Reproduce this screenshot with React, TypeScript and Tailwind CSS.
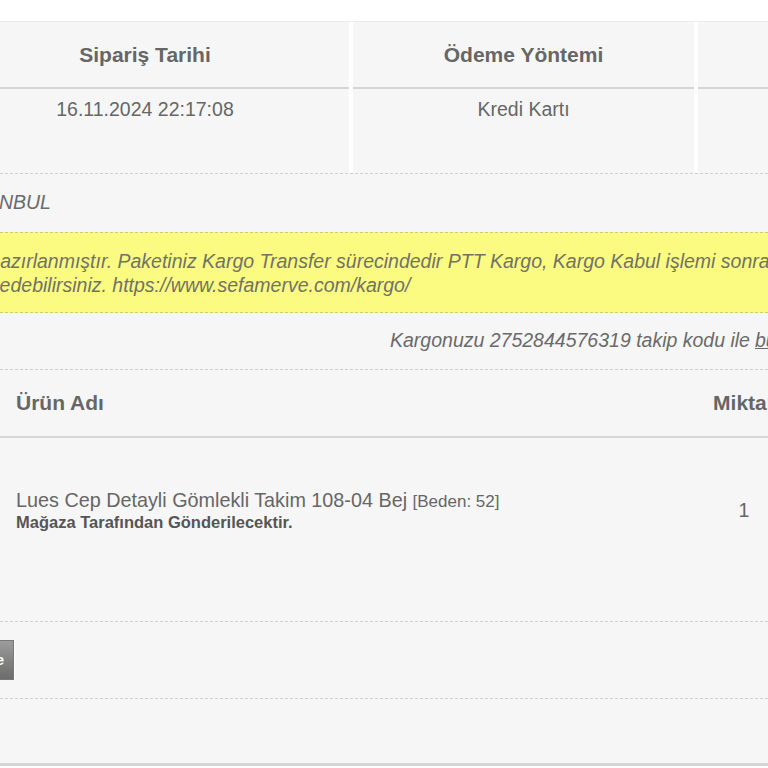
export default function App() {
  return (
    <div className="w-[768px] h-[768px] overflow-hidden bg-white font-['Liberation_Sans',Arial,sans-serif] text-[#666]">
      <div className="h-[21px]" />
      <div className="flex flex-col h-[745px] bg-[#f6f6f6] border-t border-[#ececec] border-b-[3px] border-b-[#d5d5d5]">
        {/* Order summary table */}
        <div className="flex gap-[4px] bg-white shrink-0">
          <div className="w-[349px] shrink-0 bg-[#f6f6f6]">
            <div className="h-[67px] flex items-center justify-center pr-[59px] border-b-2 border-[#d6d6d6] text-[21px] font-bold">
              Sipariş Tarihi
            </div>
            <div className="h-[84px] pt-[9px] pr-[59px] text-center text-[19.5px] leading-[22px]">
              16.11.2024 22:17:08
            </div>
          </div>
          <div className="w-[341px] shrink-0 bg-[#f6f6f6]">
            <div className="h-[67px] flex items-center justify-center border-b-2 border-[#d6d6d6] text-[21px] font-bold">
              Ödeme Yöntemi
            </div>
            <div className="h-[84px] pt-[9px] text-center text-[19.5px] leading-[22px]">
              Kredi Kartı
            </div>
          </div>
          <div className="flex-1 bg-[#f6f6f6]">
            <div className="h-[67px] border-b-2 border-[#d6d6d6]" />
            <div className="h-[84px]" />
          </div>
        </div>

        {/* Address */}
        <div className="h-[59px] shrink-0 flex items-center border-t border-dashed border-[#cfcfcf] italic text-[19.5px] text-[#6a6a6a] whitespace-nowrap">
          <span className="ml-[-43px]">İSTANBUL</span>
        </div>

        {/* Shipping notice */}
        <div className="shrink-0 bg-[#fbfb82] border-y border-dashed border-[#c9c98a] pt-[16px] pb-[15px] italic text-[19.5px] leading-[24px] text-[#727266] whitespace-nowrap">
          <div className="ml-[-105px]">
            Siparişiniz hazırlanmıştır. Paketiniz Kargo Transfer sürecindedir PTT Kargo, Kargo Kabul işlemi sonrası takip
          </div>
          <div className="ml-[-47px]">takip edebilirsiniz. https://www.sefamerve.com/kargo/</div>
        </div>

        {/* Tracking */}
        <div className="h-[57px] shrink-0 flex items-center pl-[390px] border-b border-dashed border-[#cfcfcf] italic text-[19.5px] text-[#6a6a6a] whitespace-nowrap">
          Kargonuzu 2752844576319 takip kodu ile <span className="underline ml-[5px]">buradan</span>
        </div>

        {/* Products table */}
        <div className="flex shrink-0 w-[794px]">
          <div className="w-[694px] shrink-0">
            <div className="h-[68px] flex items-center pl-[16px] border-b-2 border-[#d6d6d6] text-[21px] font-bold">
              Ürün Adı
            </div>
            <div className="h-[183px] pt-[51px] pl-[16px]">
              <div className="text-[19.8px] leading-[22px] whitespace-nowrap">
                Lues Cep Detayli Gömlekli Takim 108-04 Bej <span className="text-[17px]">[Beden: 52]</span>
              </div>
              <div className="text-[16.5px] leading-[18px] font-bold text-[#555]">
                Mağaza Tarafından Gönderilecektir.
              </div>
            </div>
          </div>
          <div className="w-[100px] shrink-0">
            <div className="h-[68px] flex items-center justify-center border-b-2 border-[#d6d6d6] text-[21px] font-bold">
              Miktar
            </div>
            <div className="h-[183px] pt-[61px] text-center text-[19.5px] leading-[22px]">1</div>
          </div>
        </div>

        {/* Actions */}
        <div className="h-[78px] shrink-0 flex items-center border-y border-dashed border-[#cfcfcf]">
          <button className="h-[40px] ml-[-39px] pl-3 pr-[9px] bg-gradient-to-b from-[#9c9c9c] to-[#6c6c6c] border border-[#777] text-white text-[15px] font-bold shadow-[1px_0_0_#fff]">
            İade
          </button>
        </div>

        <div className="flex-1" />
      </div>
    </div>
  );
}
